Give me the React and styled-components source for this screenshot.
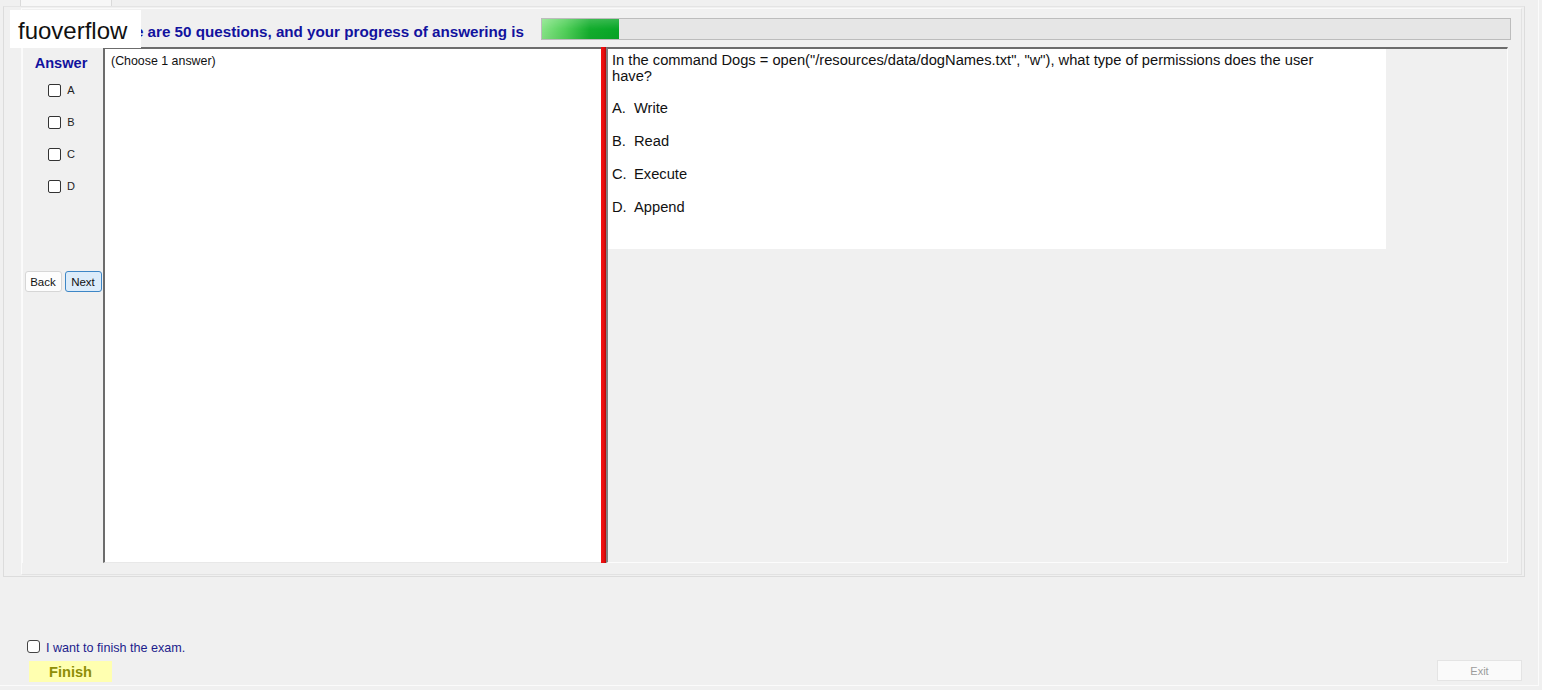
import React from 'react';
import styled, { createGlobalStyle } from 'styled-components';

const GlobalStyle = createGlobalStyle`
    html, body {
        margin: 0;
        padding: 0;
        background: #f0f0f0;
    }
    body {
        font-family: "Liberation Sans", Arial, sans-serif;
    }
`;

const Window = styled.div`
    position: relative;
    width: 1539px;
    height: 686px;
    box-sizing: border-box;
    padding-left: 3px;
    background: #f0f0f0;
    border-right: 1px solid #fbfbfb;
    border-bottom: 1px solid #fbfbfb;
    display: flex;
    flex-direction: column;
`;

const TabStrip = styled.div`
    height: 6px;
    display: flex;
`;

const Tab = styled.div`
    margin-left: 17px;
    width: 90px;
    background: #f7f7f7;
    border-left: 1px solid #dadada;
    border-right: 1px solid #dadada;
`;

const TabPage = styled.div`
    width: 1522px;
    height: 571px;
    box-sizing: border-box;
    border: 1px solid #dcdcdc;
    border-top-color: #e4e4e4;
    display: flex;
    padding: 1px 0 0 17px;
`;

const Panel = styled.div`
    width: 1501px;
    height: 567px;
    box-sizing: border-box;
    border-top: 1px solid #fafafa;
    border-left: 1px solid #fafafa;
    border-right: 1px solid #e2e2e2;
    border-bottom: 1px solid #e2e2e2;
    display: flex;
    flex-direction: column;
    padding-top: 8px;
`;

const HeaderRow = styled.div`
    height: 23px;
    display: flex;
    align-items: center;
`;

const HeaderText = styled.div`
    width: 439px;
    flex-shrink: 0;
    padding-left: 80px;
    font-size: 15.2px;
    font-weight: bold;
    color: #12129e;
    white-space: nowrap;
    padding-top: 5px;
`;

const Progress = styled.div`
    width: 970px;
    height: 22px;
    box-sizing: border-box;
    border: 1px solid #bcbcbc;
    background: #e6e6e6;
    display: flex;
`;

const ProgressFill = styled.div`
    height: 100%;
    background:
        linear-gradient(180deg, rgba(255,255,255,0.18) 0%, rgba(255,255,255,0) 50%, rgba(0,0,0,0.04) 100%),
        linear-gradient(90deg, #86e486 0%, #52d05a 30%, #13ad2d 62%, #07a727 100%);
`;

const MainRow = styled.div`
    margin-top: 7px;
    height: 516px;
    display: flex;
`;

const AnswerCol = styled.div`
    width: 81px;
    box-sizing: border-box;
    border-left: 1px solid #fbfbfb;
    display: flex;
    flex-direction: column;
    align-items: center;
    padding-top: 8px;
`;

const AnswerTitle = styled.div`
    font-size: 14.6px;
    font-weight: bold;
    color: #12129e;
    height: 16px;
    line-height: 16px;
    margin-bottom: 4px;
    margin-right: 4px;
`;

const OptionRow = styled.label`
    display: flex;
    align-items: center;
    gap: 6px;
    height: 32px;
    margin-right: 3px;
    margin-top: ${p => (p.first ? '-1px' : '0')};
    font-size: 11px;
    color: #222;
`;

const Box = styled.input.attrs({ type: 'checkbox' })`
    appearance: none;
    margin: 0;
    width: 13px;
    height: 13px;
    box-sizing: border-box;
    border: 1px solid #333;
    border-radius: 2px;
    background: #fff;
`;

const NavRow = styled.div`
    margin-top: 69px;
    display: flex;
    gap: 3px;
`;

const NavButton = styled.button`
    width: 37px;
    height: 21px;
    padding: 0;
    box-sizing: border-box;
    font-family: "Liberation Sans", Arial, sans-serif;
    font-size: 11.5px;
    color: #111;
    border-radius: 3px;
    border: 1px solid ${p => (p.primary ? '#3d86c6' : '#d6d6d6')};
    background: ${p => (p.primary ? '#dcecfa' : '#fdfdfd')};
`;

const ChoicePane = styled.div`
    width: 498px;
    box-sizing: border-box;
    background: #fff;
    border-left: 2px solid #6c6c6c;
    border-top: 2px solid #6c6c6c;
    border-bottom: 1px solid #e8e8e8;
    padding: 5px 6px;
    font-size: 12.4px;
    color: #111;
`;

const Splitter = styled.div`
    width: 5px;
    background: linear-gradient(90deg, #f21212 0%, #e60e0e 60%, #b40808 100%);
`;

const QuestionArea = styled.div`
    width: 902px;
    box-sizing: border-box;
    background: #f0f0f0;
    border-left: 2px solid #808080;
    border-top: 2px solid #6c6c6c;
    border-right: 1px solid #fcfcfc;
    border-bottom: 1px solid #fcfcfc;
`;

const QuestionBox = styled.div`
    width: 778px;
    height: 200px;
    box-sizing: border-box;
    background: #fff;
    padding: 3px 4px;
    font-size: 14.7px;
    color: #111;
`;

const QuestionText = styled.div`
    width: 716px;
    line-height: 16px;
    margin-bottom: 16px;
`;

const Choice = styled.div`
    height: 33px;
    line-height: 16px;
    display: flex;
`;

const ChoiceLetter = styled.span`
    width: 22px;
`;

const Bottom = styled.div`
    margin-top: 64px;
    display: flex;
    align-items: flex-end;
    padding-left: 24px;
`;

const FinishGroup = styled.div`
    display: flex;
    flex-direction: column;
`;

const ConfirmRow = styled.label`
    display: flex;
    align-items: center;
    gap: 6px;
    height: 18px;
    font-size: 12.6px;
    color: #1c1c8c;
    margin-bottom: 4px;
    margin-top: -2px;
`;

const RoundBox = styled(Box)`
    border-radius: 3px;
    border-color: #444;
    position: relative;
    top: -2px;
`;

const FinishButton = styled.button`
    margin-left: 2px;
    width: 83px;
    height: 21px;
    border: none;
    background: #ffffb0;
    font-family: "Liberation Sans", Arial, sans-serif;
    font-size: 14.6px;
    font-weight: bold;
    color: #8e8e08;
    padding: 0;
`;

const ExitButton = styled.button`
    margin-left: auto;
    margin-right: 16px;
    margin-bottom: 1px;
    width: 85px;
    height: 21px;
    box-sizing: border-box;
    border: 1px solid #e4e4e4;
    background: #fafafa;
    font-family: "Liberation Sans", Arial, sans-serif;
    font-size: 11px;
    color: #9c9c9c;
    padding: 0;
`;

const Watermark = styled.div`
    position: absolute;
    left: 10px;
    top: 10px;
    width: 131px;
    height: 38px;
    background: #fff;
    box-sizing: border-box;
    padding-left: 8px;
    font-family: "Liberation Sans", Arial, sans-serif;
    font-size: 24px;
    line-height: 42px;
    color: #111;
`;

const options = ['A', 'B', 'C', 'D'];
const choices = [
    ['A.', 'Write'],
    ['B.', 'Read'],
    ['C.', 'Execute'],
    ['D.', 'Append'],
];

export default function App() {
    const answered = 8;
    const total = 100;

    return (
        <>
            <GlobalStyle />
            <Window>
                <TabStrip>
                    <Tab />
                </TabStrip>
                <TabPage>
                    <Panel>
                        <HeaderRow>
                            <HeaderText>There are 50 questions, and your progress of answering is</HeaderText>
                            <Progress>
                                <ProgressFill style={{ width: `${(answered / total) * 100}%` }} />
                            </Progress>
                        </HeaderRow>
                        <MainRow>
                            <AnswerCol>
                                <AnswerTitle>Answer</AnswerTitle>
                                {options.map((o, idx) => (
                                    <OptionRow key={o} first={idx === 0}>
                                        <Box />
                                        {o}
                                    </OptionRow>
                                ))}
                                <NavRow>
                                    <NavButton>Back</NavButton>
                                    <NavButton primary>Next</NavButton>
                                </NavRow>
                            </AnswerCol>
                            <ChoicePane>(Choose 1 answer)</ChoicePane>
                            <Splitter />
                            <QuestionArea>
                                <QuestionBox>
                                    <QuestionText>
                                        In the command Dogs = open("/resources/data/dogNames.txt", "w"), what type of permissions does the user have?
                                    </QuestionText>
                                    {choices.map(([letter, text]) => (
                                        <Choice key={letter}>
                                            <ChoiceLetter>{letter}</ChoiceLetter>
                                            {text}
                                        </Choice>
                                    ))}
                                </QuestionBox>
                            </QuestionArea>
                        </MainRow>
                    </Panel>
                </TabPage>
                <Bottom>
                    <FinishGroup>
                        <ConfirmRow>
                            <RoundBox />
                            I want to finish the exam.
                        </ConfirmRow>
                        <FinishButton>Finish</FinishButton>
                    </FinishGroup>
                    <ExitButton>Exit</ExitButton>
                </Bottom>
                <Watermark>fuoverflow</Watermark>
            </Window>
        </>
    );
}
